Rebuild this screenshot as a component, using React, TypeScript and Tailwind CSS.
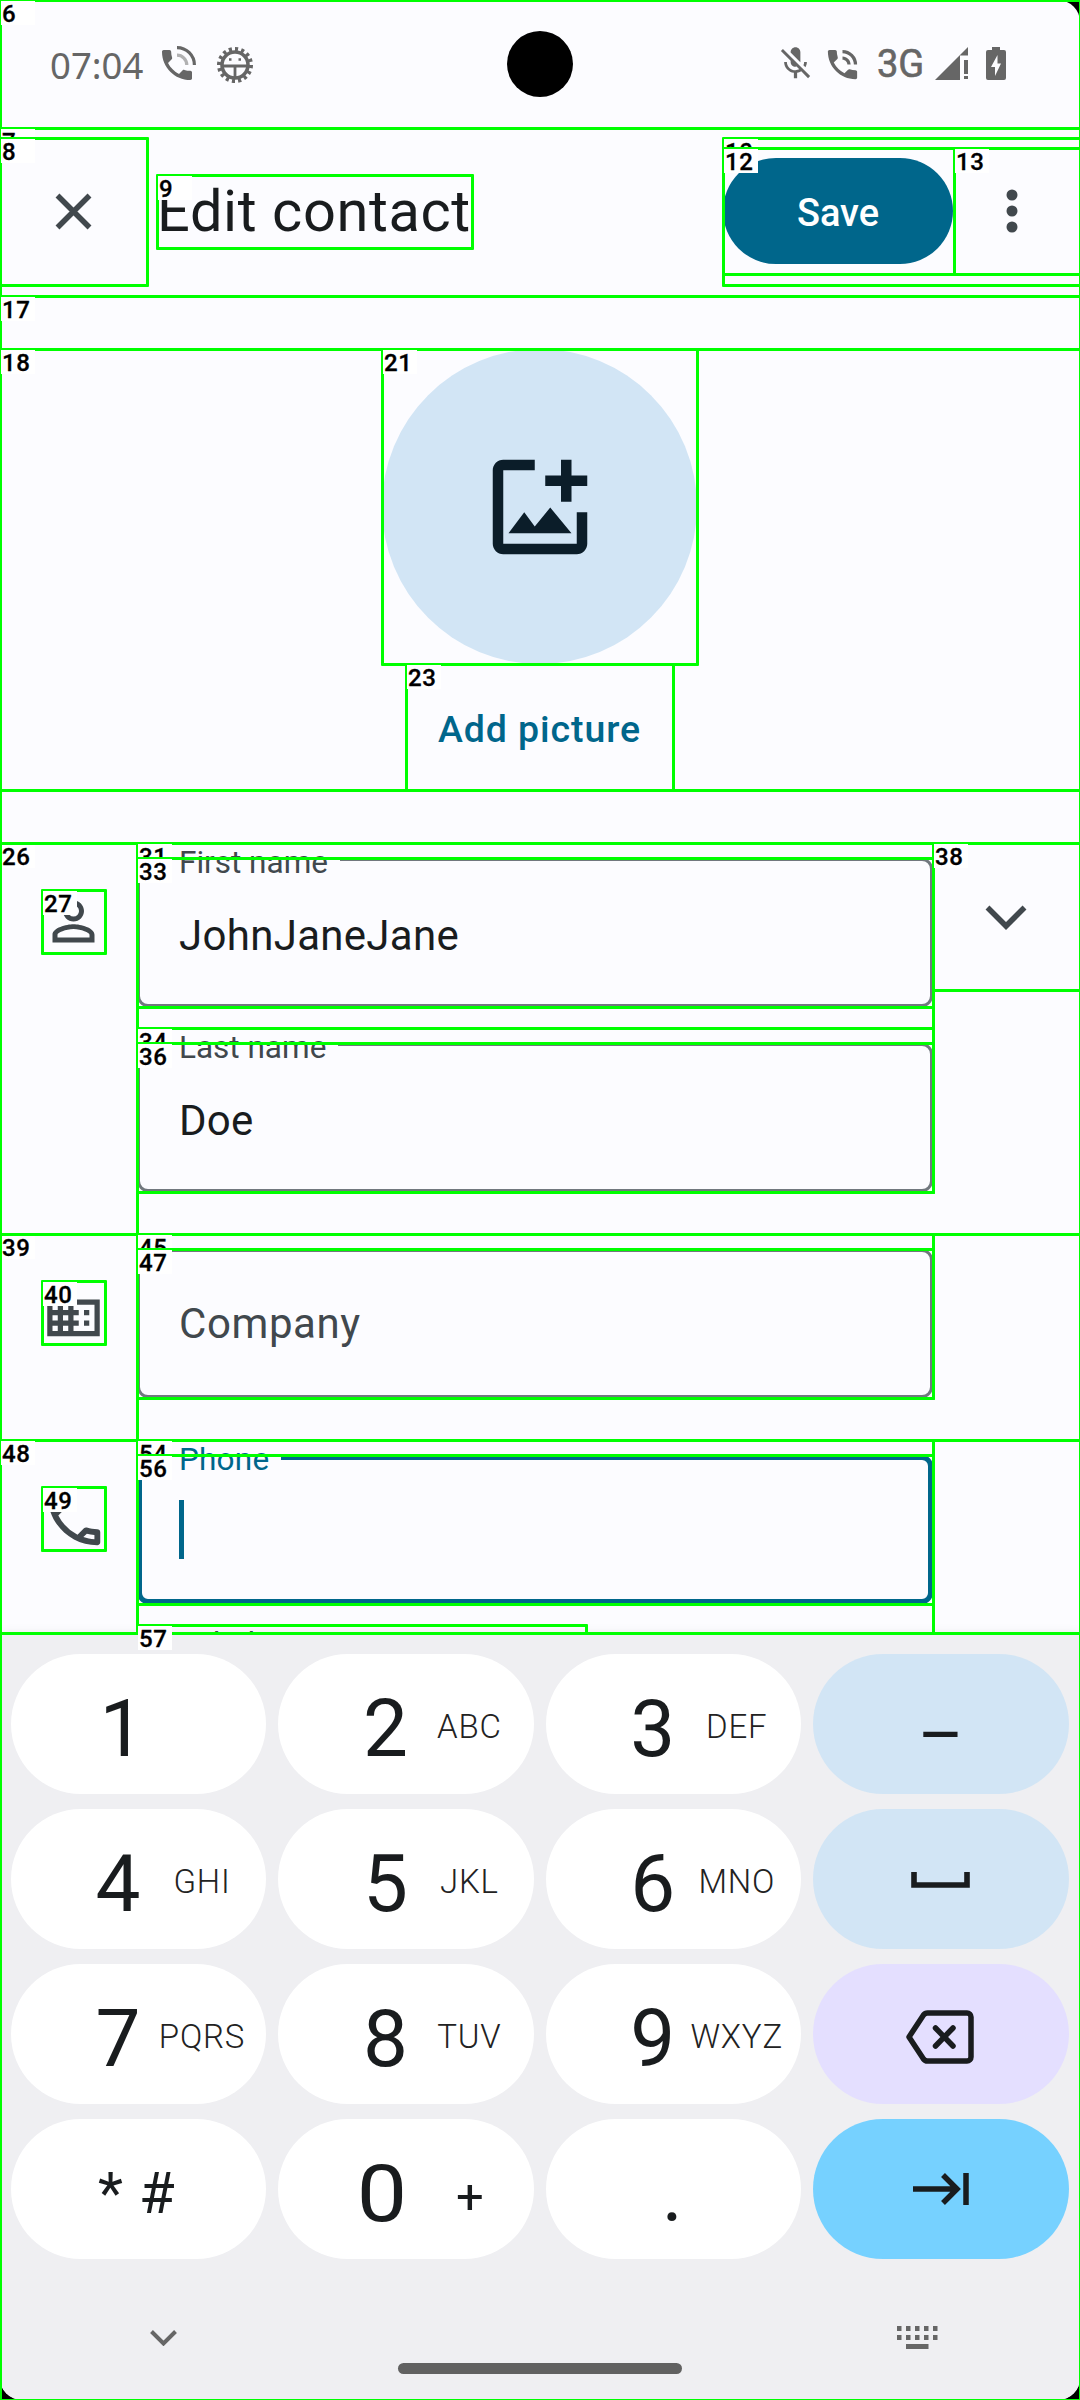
import React from "react";
import { MdPersonOutline, MdDomain, MdOutlineCall, MdMicOff, MdPhoneInTalk } from "react-icons/md";

function StatusBar() {
  return (
    <div className="relative flex h-32 shrink-0 items-start text-[#666666]">
      <div className="ml-[50px] mt-[40px] w-[111px] font-['Noto_Sans'] text-[36.500px] leading-[50px]">07:04</div>
      <svg className="mt-[45px] h-9 w-9" viewBox="0 0 36 36" fill="currentColor">
        <path
          transform="translate(-4 0) scale(1.667)"
          d="M20 15.5c-1.25 0-2.45-.2-3.57-.57-.35-.11-.74-.03-1.02.24l-2.2 2.2c-2.83-1.44-5.15-3.75-6.59-6.59l2.2-2.21c.28-.26.36-.65.25-1C8.7 6.45 8.5 5.25 8.5 4c0-.55-.45-1-1-1H4c-.55 0-1 .45-1 1 0 9.39 7.61 17 17 17 .55 0 1-.45 1-1v-3.500c0-.55-.45-1-1-1z"
        />
        <path d="M16 2.600A17.400 17.400 0 0 1 33.400 20" fill="none" stroke="currentColor" strokeWidth="3.200" />
        <path d="M16 10.200A9.800 9.800 0 0 1 25.800 20" fill="none" stroke="currentColor" strokeWidth="3.200" opacity="0.5" />
      </svg>
      <svg className="ml-5 mt-[47px] h-9 w-9" viewBox="0 0 36 36" fill="none" stroke="currentColor">
        <circle cx="18" cy="18" r="13" strokeWidth="3.600" />
        <circle cx="18" cy="18" r="16" strokeWidth="4" pathLength="64" strokeDasharray="2 2" />
        <path d="M5 19h26M18 19v12" strokeWidth="2.800" />
        <path d="M12 12.500h2.500M21.500 12.500h2.500" strokeWidth="2.400" />
      </svg>
      <div className="ml-[254px] mt-[31px] h-[66px] w-[66px] rounded-full bg-black" />
      <MdMicOff className="ml-[203px] mt-11 h-[39px] w-[39px]" />
      <MdPhoneInTalk className="ml-2 mt-[45px] h-[39px] w-[39px]" />
      <div className="ml-[15px] mt-[39px] w-[58px] font-['Roboto'] text-[38px] leading-[50px] [-webkit-text-stroke:0.6px_#666666]">3G</div>
      <svg className="mt-[47px] h-[33px] w-[33px]" viewBox="0 0 33 33" fill="currentColor">
        <path d="M0 33L33 0V8.500H25V33zM29 13h4v14h-4zM29 29h4v3h-4z" />
      </svg>
      <svg className="ml-[18px] mt-[47px] h-[33px] w-5" viewBox="0 0 20 33" fill="currentColor">
        <path fillRule="evenodd" d="M6 0h8v3h4a2 2 0 0 1 2 2v26a2 2 0 0 1-2 2H2a2 2 0 0 1-2-2V5a2 2 0 0 1 2-2h4zM11.500 8L5 20h4v9l6-12.500h-3.500z" />
      </svg>
    </div>
  );
}

function AppBar() {
  return (
    <div className="flex h-[168px] shrink-0 items-center pb-[2px] font-['Roboto']">
      <svg className="ml-[55px] h-[37px] w-[37px]" viewBox="0 0 37 37" stroke="#41484d" strokeWidth="5.500">
        <path d="M2.500 2.500l32 32M34.500 2.500l-32 32" />
      </svg>
      <h1 className="ml-[65px] w-[566px] text-[57.750px] leading-[70px] tracking-[0.6px] text-[#191c1e]">Edit contact</h1>
      <button className="flex h-[106px] w-[230px] items-center justify-center rounded-full bg-[#00668b] pt-1 text-[38px] font-medium text-white">
        Save
      </button>
      <svg className="ml-[53px] h-12 w-3" viewBox="0 0 12 48" fill="#41484d">
        <circle cx="6" cy="8" r="5.500" />
        <circle cx="6" cy="24" r="5.500" />
        <circle cx="6" cy="40" r="5.500" />
      </svg>
    </div>
  );
}

function Photo() {
  return (
    <div className="flex h-[441px] shrink-0 flex-col items-center pr-px">
      <div className="flex h-[315px] w-[315px] items-center justify-center rounded-full bg-[#d2e5f5]">
        <svg className="h-[126px] w-[126px]" viewBox="0 0 24 24" fill="#0b1d29">
          <path d="M11 3H5c-1.100 0-2 .9-2 2v14c0 1.100.9 2 2 2h14c1.100 0 2-.9 2-2v-6h-2v6H5V5h6zM16 3h2v3h3v2h-3v3h-2V8h-3V6h3zM6 17l3-4 2 2.700 2.950-3.600L18 17z" />
        </svg>
      </div>
      <div className="mt-[43px] font-['Roboto'] text-[37.500px] font-medium leading-[44px] tracking-[0.9px] text-[#00668b]">Add picture</div>
    </div>
  );
}

type FieldProps = { label?: string; value?: string; placeholder?: string; focused?: boolean };

function Field({ label, value, placeholder, focused }: FieldProps) {
  return (
    <div className="relative h-[149px] w-[796px] font-['Roboto']">
      <div
        className={
          focused
            ? "flex h-full items-center rounded-[11px] border-[5px] border-[#00668b] pl-[37px]"
            : "flex h-full items-center rounded-[11px] border-[3px] border-[#71787e] pl-[39px]"
        }
      >
        {focused && <div className="mt-[-1px] h-[59px] w-[5px] bg-[#00668b]" />}
        {value && <span className="mt-[7px] text-[42px] leading-[50px] tracking-[0.3px] text-[#191c1e]">{value}</span>}
        {placeholder && <span className="mt-[1px] text-[42px] leading-[50px] tracking-[0.6px] text-[#41484d]">{placeholder}</span>}
      </div>
      {label && (
        <span
          className={
            focused
              ? "absolute -top-[11px] left-[31px] bg-[#fcfcff] pl-[11px] pr-3 text-[31.500px] leading-8 tracking-[0.2px] text-[#00668b]"
              : "absolute -top-[11px] left-[31px] bg-[#fcfcff] pl-[11px] pr-3 text-[31.500px] leading-8 text-[#41484d]"
          }
        >
          {label}
        </span>
      )}
    </div>
  );
}

function Form() {
  return (
    <>
      <div className="flex h-[391px] shrink-0">
        <MdPersonOutline className="ml-[42px] mt-[47px] h-[63px] w-[63px] text-[#41484d]" />
        <div className="ml-8 flex flex-col gap-9 pt-[15px]">
          <Field label="First name" value="JohnJaneJane" />
          <Field label="Last name" value="Doe" />
        </div>
        <svg className="ml-[52px] mt-[61px] h-[26px] w-[42px]" viewBox="0 0 42 26" fill="none" stroke="#41484d" strokeWidth="5.500">
          <path d="M2.500 3.500L21 22L39.500 3.500" />
        </svg>
      </div>
      <div className="flex h-[206px] shrink-0">
        <MdDomain className="ml-[42px] mt-[47px] h-[63px] w-[63px] text-[#41484d]" />
        <div className="ml-8 pt-[15px]">
          <Field placeholder="Company" />
        </div>
      </div>
      <div className="flex h-[193px] shrink-0 overflow-hidden">
        <MdOutlineCall className="ml-[39px] mt-[44px] h-[70px] w-[70px] shrink-0 text-[#41484d]" />
        <div className="ml-7 pt-[15px]">
          <Field label="Phone" focused />
          <div className="ml-[42px] mt-6 font-['Roboto'] text-[31.500px] leading-8 text-[#41484d]">Label</div>
        </div>
      </div>
    </>
  );
}

function NumberKey({ digit, letters }: { digit: string; letters?: string }) {
  return (
    <div className="flex h-[140px] items-center rounded-full bg-white font-['Roboto']">
      <span
        className={
          digit === "1"
            ? "ml-[75px] mt-[9px] w-[72px] text-center text-[80px] leading-[80px] text-[#191c1e]"
            : "ml-[71px] mt-[9px] w-[72px] text-center text-[80px] leading-[80px] text-[#191c1e]"
        }
      >
        {digit}
      </span>
      <span className="mt-[5px] w-[96px] text-center text-[33px] font-light leading-10 tracking-[0.8px] text-[#222222]">{letters}</span>
    </div>
  );
}

function ActionKey({ tone, children }: { tone: string; children: React.ReactNode }) {
  return <div className={"flex h-[140px] items-center justify-center rounded-full " + tone}>{children}</div>;
}

function Keyboard() {
  return (
    <div className="h-[767px] shrink-0 bg-[#efeff2] pt-[21px] shadow-[0_0_10px_rgba(0,0,0,0.080)]">
      <div className="grid grid-cols-4 gap-x-3 gap-y-[15px] pl-[11px] pr-[11.500px]">
        <NumberKey digit="1" />
        <NumberKey digit="2" letters="ABC" />
        <NumberKey digit="3" letters="DEF" />
        <ActionKey tone="bg-[#d2e5f5]">
          <span className="mt-[22px] font-['Roboto'] text-[70px] leading-[60px] text-[#191c1e]">–</span>
        </ActionKey>
        <NumberKey digit="4" letters="GHI" />
        <NumberKey digit="5" letters="JKL" />
        <NumberKey digit="6" letters="MNO" />
        <ActionKey tone="bg-[#d2e5f5]">
          <svg className="mt-0.5 h-4 w-[59px]" viewBox="0 0 59 16" fill="none" stroke="#191c1e" strokeWidth="5.600">
            <path d="M3 0V13H56V0" />
          </svg>
        </ActionKey>
        <NumberKey digit="7" letters="PQRS" />
        <NumberKey digit="8" letters="TUV" />
        <NumberKey digit="9" letters="WXYZ" />
        <ActionKey tone="bg-[#e4dfff]">
          <svg className="mr-0.5 mt-[5px] h-[54px] w-[68px]" viewBox="0 0 68 54" fill="none" stroke="#191c1e" strokeWidth="5.500" strokeLinejoin="round" strokeLinecap="round">
            <path d="M21.500 3H61a4 4 0 0 1 4 4V47a4 4 0 0 1-4 4H21.500a5 5 0 0 1-4-2L3 27L17.500 5a5 5 0 0 1 4-2z" />
            <path d="M29.500 18l17.500 18M47 18L29.500 36" />
          </svg>
        </ActionKey>
        <div className="flex h-[140px] items-center gap-4 rounded-full bg-white pl-[87px] font-['Roboto'] text-[#191c1e]">
          <span className="mt-2 text-[58px] leading-[60px]">*</span>
          <span className="mt-2 text-[58px] leading-[60px]">#</span>
        </div>
        <div className="flex h-[140px] items-center rounded-full bg-white font-['Roboto'] text-[#191c1e]">
          <span className="ml-[68px] mt-[9px] w-[72px] scale-x-[1.120] text-center text-[80px] leading-[80px]">0</span>
          <span className="mt-4 w-[103px] text-center text-[49px] leading-[60px]">+</span>
        </div>
        <div className="flex h-[140px] items-center rounded-full bg-white pl-[116px] font-['Roboto'] text-[#191c1e]">
          <span className="mt-[9px] text-[80px] leading-[80px]">.</span>
        </div>
        <ActionKey tone="bg-[#76d1ff]">
          <svg className="h-8 w-14" viewBox="0 0 56 32" fill="none" stroke="#191c1e" strokeWidth="5.500">
            <path d="M0 16H44M30 2L44 16L30 30M53 0V32" />
          </svg>
        </ActionKey>
      </div>
      <div className="flex h-[104px] items-end justify-between pl-[150px] pr-[142px]">
        <svg className="mb-[17px] h-4 w-[27px]" viewBox="0 0 27 16" fill="none" stroke="#666666" strokeWidth="4">
          <path d="M1.500 1.500L13.500 13.500L25.500 1.500" />
        </svg>
        <svg className="mb-[14px] h-[23px] w-[41px]" viewBox="0 0 41 23" fill="#666666">
          <path d="M0 0h4.500v5H0zM9 0h4.500v5H9zM18 0h4.500v5H18zM27 0h4.500v5H27zM36 0h4.500v5H36zM0 9h4.500v5H0zM9 9h4.500v5H9zM18 9h4.500v5H18zM27 9h4.500v5H27zM36 9h4.500v5H36zM9 18h22.500v5H9z" />
        </svg>
      </div>
      <div className="mx-auto h-[11px] w-[284px] rounded-full bg-[#616161]" />
    </div>
  );
}

/* Element bounds shown by the layout inspector: [id, left, top, right, bottom]. */
const bounds: [string, number, number, number, number][] = [
  ["", 0, 0, 1080, 2400],
  ["6", 0, 0, 1080, 128],
  ["7", 0, 128, 1080, 296],
  ["8", 0, 138, 147, 285],
  ["9", 157, 175, 472, 248],
  ["10", 723, 138, 1080, 285],
  ["12", 723, 148, 954, 274],
  ["13", 954, 148, 1080, 274],
  ["17", 0, 296, 1080, 349],
  ["18", 0, 349, 1080, 790],
  ["21", 382, 349, 697, 664],
  ["23", 406, 664, 673, 790],
  ["26", 0, 843, 1080, 1234],
  ["27", 42, 890, 105, 953],
  ["", 0, 843, 137, 1234],
  ["31", 137, 843, 933, 1028],
  ["33", 137, 858, 933, 1007],
  ["34", 137, 1028, 933, 1192],
  ["36", 137, 1043, 933, 1192],
  ["38", 933, 843, 1080, 990],
  ["39", 0, 1234, 1080, 1440],
  ["40", 42, 1281, 105, 1344],
  ["", 0, 1234, 137, 1440],
  ["45", 137, 1234, 933, 1398],
  ["47", 137, 1249, 933, 1398],
  ["48", 0, 1440, 1080, 1633],
  ["49", 42, 1487, 105, 1550],
  ["54", 137, 1440, 933, 1633],
  ["56", 137, 1455, 933, 1604],
  ["57", 137, 1625, 586, 1633],
];

function Inspector() {
  return (
    <div className="pointer-events-none absolute inset-0 overflow-hidden">
      {bounds.map(([id, l, t, r, b], i) => (
        <React.Fragment key={i}>
          <div
            className="absolute rounded-[1px] border-[3px] border-[#00ff00]"
            style={{ left: l - 1, top: t - 1, width: r - l + 3, height: b - t + 3 }}
          />
          {id && (
            <div
              className="absolute flex h-6 w-[34px] items-center bg-white pl-px pt-[2px] font-['Roboto'] text-[24px] font-medium leading-[22px] tracking-[0.6px] text-black [-webkit-text-stroke:0.3px_#000]"
              style={{ left: l + 1, top: t + 1 }}
            >
              {id}
            </div>
          )}
        </React.Fragment>
      ))}
    </div>
  );
}

export default function App() {
  return (
    <div className="relative h-[2400px] w-[1080px] overflow-hidden bg-black">
      <div className="flex h-full flex-col overflow-hidden rounded-[22px] bg-[#fcfcff]">
        <StatusBar />
        <AppBar />
        <div className="h-[53px] shrink-0" />
        <Photo />
        <div className="h-[53px] shrink-0" />
        <Form />
        <Keyboard />
      </div>
      <Inspector />
    </div>
  );
}
